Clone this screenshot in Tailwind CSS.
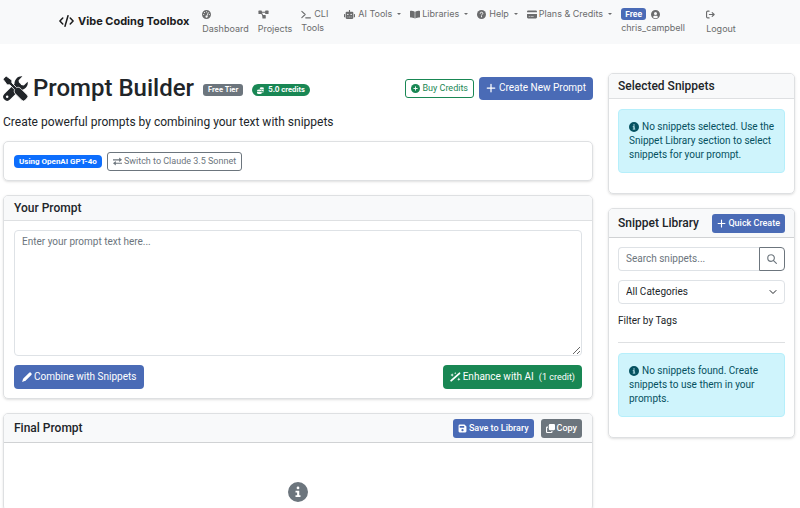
<!DOCTYPE html>
<html lang="en">
<head>
  <meta charset="UTF-8" />
  <meta name="viewport" content="width=device-width, initial-scale=1.0" />
  <title>Prompt Builder - Vibe Coding Toolbox</title>
  <script src="https://cdn.jsdelivr.net/npm/@tailwindcss/browser@4"></script>
</head>
<body class="bg-white font-[Roboto,sans-serif] text-[10px] leading-[14px] text-[#212529]">
  <!-- icon set -->
  <svg class="hidden">
    <symbol id="i-code" viewBox="0 0 20 16"><path d="M5 4 1.200 8 5 12M15 4l3.800 4L15 12M12 1 8 15" fill="none" stroke="currentColor" stroke-width="2" stroke-linecap="round" stroke-linejoin="round"/></symbol>
    <symbol id="i-gauge" viewBox="0 0 16 16"><path fill-rule="evenodd" fill="currentColor" d="M8 0a8 8 0 1 0 0 16A8 8 0 0 0 8 0zm0 2a1 1 0 1 1 0 2 1 1 0 0 1 0-2zM4.500 3.500a1 1 0 1 1 0 2 1 1 0 0 1 0-2zM3 7a1 1 0 1 1 0 2 1 1 0 0 1 0-2zm10 0a1 1 0 1 1 0 2 1 1 0 0 1 0-2zm-2.300-3.300c.6-.5 1.400.1 1.100.8L9.600 10.200A2 2 0 1 1 8.300 9.600z"/></symbol>
    <symbol id="i-diagram" viewBox="0 0 18 16"><path d="M4 4h9M5 5l4 7" fill="none" stroke="currentColor" stroke-width="2"/><g fill="currentColor"><rect y="1" width="6" height="6" rx="1"/><rect x="12" y="1" width="6" height="6" rx="1"/><rect x="7" y="9" width="6" height="6" rx="1"/></g></symbol>
    <symbol id="i-terminal" viewBox="0 0 18 16"><path d="m1.500 2.500 6 5.500-6 5.500M8.500 14H17" fill="none" stroke="currentColor" stroke-width="2" stroke-linecap="round" stroke-linejoin="round"/></symbol>
    <symbol id="i-robot" viewBox="0 0 20 16"><path fill-rule="evenodd" fill="currentColor" d="M9 0h2v3h4a2 2 0 0 1 2 2v9a2 2 0 0 1-2 2H5a2 2 0 0 1-2-2V5a2 2 0 0 1 2-2h4zM7 6.500a1.300 1.300 0 1 0 0 2.600 1.300 1.300 0 0 0 0-2.600zm6 0a1.300 1.300 0 1 0 0 2.600 1.300 1.300 0 0 0 0-2.600zM6 12v1h2v-1zm3 0v1h2v-1zm3 0v1h2v-1zM0 8a1 1 0 0 1 1-1h1v6H1a1 1 0 0 1-1-1zm18-1h1a1 1 0 0 1 1 1v4a1 1 0 0 1-1 1h-1z"/></symbol>
    <symbol id="i-book" viewBox="0 0 18 16"><path fill="currentColor" d="M8.500 3v12C6 13.700 3.500 13.500.8 13.400a.8.8 0 0 1-.8-.8V2c0-.5.400-.9.900-.9C4 1.100 6.500 1.600 8.500 3zm1 0v12c2.500-1.300 5-1.500 7.700-1.600a.8.8 0 0 0 .8-.8V2c0-.5-.4-.9-.9-.9-3.100 0-5.600.5-7.600 1.900z"/></symbol>
    <symbol id="i-help" viewBox="0 0 16 16"><circle cx="8" cy="8" r="8" fill="currentColor"/><path d="M5.700 5.900C5.700 4.600 6.700 4 8 4s2.400.7 2.400 2C10.400 7.500 8 7.700 8 9.300" fill="none" stroke="#fff" stroke-width="1.600" stroke-linecap="round"/><circle cx="8" cy="11.800" r="1" fill="#fff"/></symbol>
    <symbol id="i-card" viewBox="0 0 18 16"><path fill-rule="evenodd" fill="currentColor" d="M2 1h14a2 2 0 0 1 2 2v1H0V3a2 2 0 0 1 2-2zM0 7h18v6a2 2 0 0 1-2 2H2a2 2 0 0 1-2-2zm3 4v1h3v-1zm4 0v1h5v-1z"/></symbol>
    <symbol id="i-user" viewBox="0 0 16 16"><path fill-rule="evenodd" fill="currentColor" d="M8 0a8 8 0 1 0 0 16A8 8 0 0 0 8 0zm0 3.500a2.700 2.700 0 1 1 0 5.400 2.700 2.700 0 0 1 0-5.400zM3.600 12.700C4.200 11 5.300 10.200 7 10.200h2c1.700 0 2.800.8 3.400 2.500A6.500 6.500 0 0 1 8 14.500a6.500 6.500 0 0 1-4.400-1.800z"/></symbol>
    <symbol id="i-logout" viewBox="0 0 16 16"><path d="M5.500 2H3a2 2 0 0 0-2 2v8a2 2 0 0 0 2 2h2.500M6 8h8M11 4.500 14.500 8 11 11.500" fill="none" stroke="currentColor" stroke-width="2" stroke-linecap="round" stroke-linejoin="round"/></symbol>
    <symbol id="i-tools" viewBox="0 0 24 24"><path d="M4 20 14 10" stroke="currentColor" stroke-width="7.500" stroke-linecap="round"/><path fill="currentColor" d="M23.700 5.600a6.800 6.800 0 0 1-8.300 7.600l-4-4A6.800 6.800 0 0 1 18.600.3L15 4l.5 4.500L20 9z"/><path fill="currentColor" d="M0 3 3 0l5.500 4v2.600l4.600 4.600c1.500-.7 2.700-.4 4 .9l6 6a2.200 2.200 0 0 1 0 3.200l-1.900 1.900a2.200 2.200 0 0 1-3.200 0l-6-6c-1.300-1.300-1.600-2.500-.9-4L6.600 8.500H4z" stroke="#fff" stroke-width=".8"/><circle cx="4" cy="20" r="1.200" fill="#fff"/></symbol>
    <symbol id="i-coins" viewBox="0 0 16 16"><g fill="currentColor"><ellipse cx="11" cy="3" rx="5" ry="2.500"/><path d="M10.500 6.500C13 6.700 15 6 16 5v2.500c0 1-2 2-4 2zM12 11c2-.2 3.300-.8 4-1.500V11c0 1-2 2-4 2z"/><ellipse cx="5.500" cy="8" rx="5.500" ry="2.500"/><path d="M0 10c2 2 9 2 11 0v3.500c0 3-11 3-11 0z"/></g></symbol>
    <symbol id="i-plus-circle" viewBox="0 0 16 16"><circle cx="8" cy="8" r="8" fill="currentColor"/><path d="M8 5v6M5 8h6" stroke="#fff" stroke-width="1.600" stroke-linecap="round"/></symbol>
    <symbol id="i-plus" viewBox="0 0 16 16"><path d="M8 2v12M2 8h12" stroke="currentColor" stroke-width="2" stroke-linecap="round"/></symbol>
    <symbol id="i-swap" viewBox="0 0 16 16"><path fill="currentColor" d="M0 4h11V1l5 4-5 4V6H0zM16 12H5v3l-5-4 5-4v3h11z"/></symbol>
    <symbol id="i-pen" viewBox="0 0 16 16"><path fill="currentColor" d="M11.500 1.200a2 2 0 0 1 2.800 0l.6.600a2 2 0 0 1 0 2.800L6 13.500c-.5.500-1 .8-1.700 1L.2 15.800l1.300-4.100c.2-.7.500-1.200 1-1.700z"/></symbol>
    <symbol id="i-wand" viewBox="0 0 18 16"><path d="M2 14 15.500 2" stroke="currentColor" stroke-width="3" stroke-linecap="round"/><path fill="currentColor" d="m3.500 2 .8 2 2 .8-2 .8-.8 2-.8-2-2-.8 2-.8zM8.500 0l.5 1.200 1.200.5-1.200.5-.5 1.200L8 2.200l-1.200-.5L8 1.200zm6 9 .8 2 2 .8-2 .8-.8 2-.8-2-2-.8 2-.8z"/></symbol>
    <symbol id="i-save" viewBox="0 0 16 16"><path fill-rule="evenodd" fill="currentColor" d="M3 1h8.500L15 4.500V13a2 2 0 0 1-2 2H3a2 2 0 0 1-2-2V3a2 2 0 0 1 2-2zm0 2.500v3h8v-3zM8 9a2 2 0 1 0 0 4 2 2 0 0 0 0-4z"/></symbol>
    <symbol id="i-copy" viewBox="0 0 16 16"><rect x="5" width="11" height="11" rx="2" fill="currentColor"/><path d="M3.500 5.500H2a1 1 0 0 0-1 1V14a1 1 0 0 0 1 1h7.500a1 1 0 0 0 1-1v-1.500" fill="none" stroke="currentColor" stroke-width="2"/></symbol>
    <symbol id="i-info" viewBox="0 0 16 16"><path fill-rule="evenodd" fill="currentColor" d="M8 0a8 8 0 1 0 0 16A8 8 0 0 0 8 0zm0 3.600a1.100 1.100 0 1 1 0 2.200 1.100 1.100 0 0 1 0-2.200zM6 6.900h3v3.700h1V12H6v-1.400h1.300V8.300H6z"/></symbol>
    <symbol id="i-search" viewBox="0 0 16 16"><path d="m10.500 10.500 4.500 4.500M6.500 1.200a5.300 5.300 0 1 1 0 10.600 5.300 5.300 0 0 1 0-10.600z" fill="none" stroke="currentColor" stroke-width="1.800" stroke-linecap="round"/></symbol>
    <symbol id="i-caret" viewBox="0 0 8 4"><path d="M0 0h8L4 4z" fill="currentColor"/></symbol>
    <symbol id="i-chevron" viewBox="0 0 16 16"><path d="m2 5 6 6 6-6" fill="none" stroke="currentColor" stroke-width="2" stroke-linecap="round" stroke-linejoin="round"/></symbol>
  </svg>

  <nav class="flex h-11 items-start bg-[#f8f9fa] pl-[59px] pt-[7px] font-[Inter,sans-serif] text-[9px] text-[#6b6c6d]">
    <a href="#" class="mr-[13px] flex items-center gap-1 self-start pt-[7px] text-[11px] font-bold text-[#1b1c1d] whitespace-nowrap"><svg class="h-3 w-[15px]"><use href="#i-code"/></svg>Vibe Coding Toolbox</a>
    <div class="flex gap-[9px] whitespace-nowrap">
      <a href="#"><svg class="my-[3px] size-[9px]"><use href="#i-gauge"/></svg>Dashboard</a>
      <a href="#"><svg class="my-[3px] h-[9px] w-[11px]"><use href="#i-diagram"/></svg>Projects</a>
      <a href="#" class="w-[34px]"><svg class="mr-[3px] inline-block h-[9px] w-[10px]"><use href="#i-terminal"/></svg>CLI<br />Tools</a>
      <a href="#" class="flex h-[14px] items-center"><svg class="mr-[3px] h-[9px] w-[11px]"><use href="#i-robot"/></svg>AI Tools<svg class="ml-[5px] h-[2px] w-1"><use href="#i-caret"/></svg></a>
      <a href="#" class="flex h-[14px] items-center"><svg class="mr-[2px] h-[9px] w-[10px]"><use href="#i-book"/></svg>Libraries<svg class="ml-[5px] h-[2px] w-1"><use href="#i-caret"/></svg></a>
      <a href="#" class="flex h-[14px] items-center"><svg class="mr-[3px] size-[9px]"><use href="#i-help"/></svg>Help<svg class="ml-[5px] h-[2px] w-1"><use href="#i-caret"/></svg></a>
      <a href="#" class="flex h-[14px] items-center"><svg class="mr-[2px] h-[9px] w-[10px]"><use href="#i-card"/></svg>Plans &amp; Credits<svg class="ml-[5px] h-[2px] w-1"><use href="#i-caret"/></svg></a>
      <a href="#" class="w-[76px]"><span class="flex h-[14px] items-center gap-[5px]"><span class="rounded-[3px] bg-[#4a6bb6] px-1 text-[8px] leading-3 font-bold text-white">Free</span><svg class="size-[9px]"><use href="#i-user"/></svg></span>chris_campbell</a>
      <a href="#"><svg class="my-[3px] size-[9px]"><use href="#i-logout"/></svg>Logout</a>
    </div>
  </nav>

  <div class="flex items-start gap-[15px] pt-[29px] pr-[5px] pl-[3px]">
    <main class="min-w-0 flex-1">
      <header class="flex h-[30px] items-center justify-between">
        <div class="flex items-center">
          <svg class="size-[25px]"><use href="#i-tools"/></svg>
          <h1 class="ml-[5px] text-[24px] leading-[30px] font-medium">Prompt Builder</h1>
          <span class="mt-1 ml-[9px] rounded-[3px] bg-[#6c757d] px-[5px] font-[Inter,sans-serif] text-[7px] leading-3 font-bold text-white">Free Tier</span>
          <span class="mt-1 ml-[9px] flex items-center gap-1 rounded-full bg-[#198754] px-[5px] font-[Inter,sans-serif] text-[7px] leading-3 font-bold text-white"><svg class="size-[7px]"><use href="#i-coins"/></svg>5.0 credits</span>
        </div>
        <div class="flex items-center gap-[5px] whitespace-nowrap">
          <button class="flex h-[19px] items-center gap-[2px] rounded-[3px] border border-[#198754] px-[5px] text-[9px] text-[#198754]"><svg class="size-[9px]"><use href="#i-plus-circle"/></svg>Buy Credits</button>
          <button class="flex h-[23px] items-center gap-[3px] rounded-[4px] bg-[#4a6bb6] px-[7px] text-[10px] text-white"><svg class="size-[10px]"><use href="#i-plus"/></svg>Create New Prompt</button>
        </div>
      </header>
      <p class="mt-[11px] text-[12px] leading-4">Create powerful prompts by combining your text with snippets</p>

      <section class="mt-[11px] flex h-10 items-center gap-[5px] rounded-[5px] border border-[#dee0e2] px-[10px] shadow-sm">
        <span class="rounded-[4px] bg-[#0d6efd] px-[5px] text-[8px] leading-[13px] font-bold text-white">Using OpenAI GPT-4o</span>
        <button class="flex h-[19px] items-center gap-[2px] rounded-[3px] border border-[#6c757d] px-[5px] text-[9px] text-[#6c757d]"><svg class="size-[9px]"><use href="#i-swap"/></svg>Switch to Claude 3.5 Sonnet</button>
      </section>

      <section class="mt-[14px] overflow-hidden rounded-[5px] border border-[#dee0e2] shadow-sm">
        <div class="border-b border-[#dee0e2] bg-[#f8f9fa] px-[10px] py-1"><h2 class="text-[12px] leading-4 font-medium"><label for="prompt">Your Prompt</label></h2></div>
        <div class="px-[10px] py-[9px]">
          <textarea id="prompt" placeholder="Enter your prompt text here..." class="block h-[126px] w-full rounded-[4px] border border-[#dee2e6] px-[7px] py-1 text-[10px] leading-[14px] placeholder:text-[#6c757d]"></textarea>
          <div class="mt-[9px] flex justify-between text-[10px] text-white">
            <button class="flex h-6 items-center gap-[2px] rounded-[4px] bg-[#4a6bb6] px-2"><svg class="size-[10px]"><use href="#i-pen"/></svg>Combine with Snippets</button>
            <button class="flex h-6 items-center gap-[2px] rounded-[4px] bg-[#198754] px-[7px]"><svg class="h-[10px] w-[11px]"><use href="#i-wand"/></svg>Enhance with AI <span class="ml-[3px] text-[9px]">(1 credit)</span></button>
          </div>
        </div>
      </section>

      <section class="mt-[14px] overflow-hidden rounded-[5px] border border-[#dee0e2] shadow-sm">
        <div class="flex h-[29px] items-center justify-between border-b border-[#d0d2d4] bg-[#f8f9fa] px-[10px]">
          <h2 class="text-[12px] leading-4 font-medium">Final Prompt</h2>
          <div class="flex gap-[7px] text-[9px] font-medium text-white">
            <button class="flex h-[19px] items-center gap-[2px] rounded-[3px] bg-[#4a6bb6] px-[5px]"><svg class="size-[9px]"><use href="#i-save"/></svg>Save to Library</button>
            <button class="flex h-[19px] items-center gap-[2px] rounded-[3px] bg-[#6c757d] px-[5px]"><svg class="size-[9px]"><use href="#i-copy"/></svg>Copy</button>
          </div>
        </div>
        <div class="flex justify-center pt-[39px] pb-2 text-[#6c757d]"><svg class="size-5"><use href="#i-info"/></svg></div>
      </section>
    </main>

    <aside class="w-[187px] shrink-0">
      <section class="overflow-hidden rounded-[5px] border border-[#dee0e2] shadow-sm">
        <div class="border-b border-[#dee0e2] bg-[#f8f9fa] px-[9px] py-1"><h2 class="text-[12px] leading-4 font-medium">Selected Snippets</h2></div>
        <div class="px-[9px] pt-[10px] pb-5">
          <p class="rounded-[4px] border border-[#b6effb] bg-[#cff4fc] py-[10px] pr-1 pl-[10px] text-[#055160]"><svg class="mr-[3px] mb-px inline-block size-[10px]"><use href="#i-info"/></svg>No snippets selected. Use the Snippet Library section to select snippets for your prompt.</p>
        </div>
      </section>

      <section class="mt-[14px] overflow-hidden rounded-[5px] border border-[#dee0e2] shadow-sm">
        <div class="flex h-[29px] items-center justify-between border-b border-[#d0d2d4] bg-[#f8f9fa] px-[9px]">
          <h2 class="text-[12px] leading-4 font-medium">Snippet Library</h2>
          <button class="flex h-[19px] items-center gap-[2px] rounded-[3px] bg-[#4a6bb6] px-[5px] text-[9px] font-medium text-white"><svg class="size-[9px]"><use href="#i-plus"/></svg>Quick Create</button>
        </div>
        <div class="px-[9px] pt-[9px] pb-5">
          <div class="flex h-6">
            <input type="search" aria-label="Search snippets" placeholder="Search snippets..." class="min-w-0 flex-1 rounded-l-[4px] border border-r-0 border-[#dee2e6] px-[7px] placeholder:text-[#6c757d]" />
            <button aria-label="Search" class="flex w-[26px] items-center justify-center rounded-r-[4px] border border-[#6c757d] text-[#6c757d]"><svg class="size-[10px]"><use href="#i-search"/></svg></button>
          </div>
          <div class="relative mt-[9px]">
            <select aria-label="Category" class="block h-6 w-full appearance-none rounded-[4px] border border-[#dee2e6] px-[7px]"><option>All Categories</option></select>
            <svg class="pointer-events-none absolute top-2 right-2 size-2"><use href="#i-chevron"/></svg>
          </div>
          <h3 class="mt-[10px]">Filter by Tags</h3>
          <hr class="mt-[14px] mb-[10px] border-[#dee0e2]" />
          <p class="rounded-[4px] border border-[#b6effb] bg-[#cff4fc] py-[10px] pr-1 pl-[10px] text-[#055160]"><svg class="mr-[3px] mb-px inline-block size-[10px]"><use href="#i-info"/></svg>No snippets found. Create snippets to use them in your prompts.</p>
        </div>
      </section>
    </aside>
  </div>
</body>
</html>
